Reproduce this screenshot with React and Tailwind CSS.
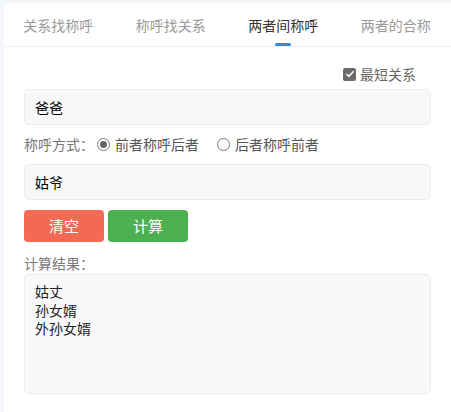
import React, { useState } from 'react'

const tabs = ['关系找称呼', '称呼找关系', '两者间称呼', '两者的合称']

function Radio({ checked, label, onClick }) {
  return (
    <label onClick={onClick} className="flex items-center gap-[5px] cursor-pointer">
      <span className="w-[13px] h-[13px] rounded-full border border-[#777] flex items-center justify-center bg-white">
        {checked && <span className="w-[7px] h-[7px] rounded-full bg-[#666]" />}
      </span>
      <span className="text-[#555]">{label}</span>
    </label>
  )
}

export default function App() {
  const [active, setActive] = useState(2)
  const [mode, setMode] = useState(0)
  const [first, setFirst] = useState('爸爸')
  const [second, setSecond] = useState('姑爷')
  const [result, setResult] = useState('姑丈\n孙女婿\n外孙女婿')

  return (
    <div
      className="w-[451px] h-[412px] overflow-hidden bg-[#f3f6fa] pl-[4px] pt-[3px]"
      style={{ fontFamily: '"Noto Sans CJK SC", "Noto Sans", sans-serif' }}
    >
      <div className="bg-white h-full">
        {/* tab bar */}
        <div className="h-[44px] border-b border-[#eeeeee] overflow-hidden">
          <div className="flex -ml-[2px]">
            {tabs.map((t, i) => (
              <button
                key={t}
                onClick={() => setActive(i)}
                className={`relative shrink-0 w-[112.5px] h-[44px] text-[14px] leading-[39px] ${
                  i === active ? 'text-[#333]' : 'text-[#999]'
                }`}
              >
                {t}
                {i === active && (
                  <span className="absolute left-1/2 -translate-x-1/2 bottom-[1px] w-[16px] h-[3px] rounded-full bg-[#2b8ce6]" />
                )}
              </button>
            ))}
          </div>
        </div>

        <div className="px-[20px] pt-[17px] text-[14px]">
          <div className="flex justify-end pr-[15px] h-[20px] items-center">
            <label className="flex items-center gap-[4px] text-[#666]">
              <span className="w-[13px] h-[13px] rounded-[2px] bg-[#6b6b6b] flex items-center justify-center">
                <svg viewBox="0 0 12 12" className="w-[10px] h-[10px]">
                  <path d="M2.2 6.3 L4.8 8.8 L9.8 3.3" fill="none" stroke="#fff" strokeWidth="1.9" strokeLinecap="round" strokeLinejoin="round" />
                </svg>
              </span>
              最短关系
            </label>
          </div>

          <input
            value={first}
            onChange={(e) => setFirst(e.target.value)}
            className="mt-[5px] w-full h-[36px] px-[10px] bg-[#f8f8f8] border border-[#ebebeb] rounded-[5px] text-[14px] text-black outline-none"
          />

          <div className="mt-[9px] h-[20px] flex items-center text-[#777]">
            <span className="mr-[3px]">称呼方式：</span>
            <Radio checked={mode === 0} label="前者称呼后者" onClick={() => setMode(0)} />
            <span className="w-[18px]" />
            <Radio checked={mode === 1} label="后者称呼前者" onClick={() => setMode(1)} />
          </div>

          <input
            value={second}
            onChange={(e) => setSecond(e.target.value)}
            className="mt-[10px] w-full h-[36px] px-[10px] bg-[#f8f8f8] border border-[#ebebeb] rounded-[5px] text-[14px] text-black outline-none"
          />

          <div className="mt-[10px] flex gap-[4px]">
            <button
              onClick={() => { setFirst(''); setSecond(''); setResult('') }}
              className="w-[80px] h-[32px] rounded-[4px] bg-[#f26a53] text-white text-[15px]"
            >
              清空
            </button>
            <button className="w-[80px] h-[32px] rounded-[4px] bg-[#4caf50] text-white text-[15px]">
              计算
            </button>
          </div>

          <div className="mt-[11px] h-[20px] leading-[20px] text-[#777]">计算结果：</div>

          <textarea
            value={result}
            onChange={(e) => setResult(e.target.value)}
            className="mt-[1px] w-full h-[120px] px-[10px] py-[7px] bg-[#f9f9f9] border border-[#ebebeb] rounded-[5px] text-[14px] leading-[18.5px] text-[#222] resize-none outline-none block"
          />
        </div>
      </div>
    </div>
  )
}
